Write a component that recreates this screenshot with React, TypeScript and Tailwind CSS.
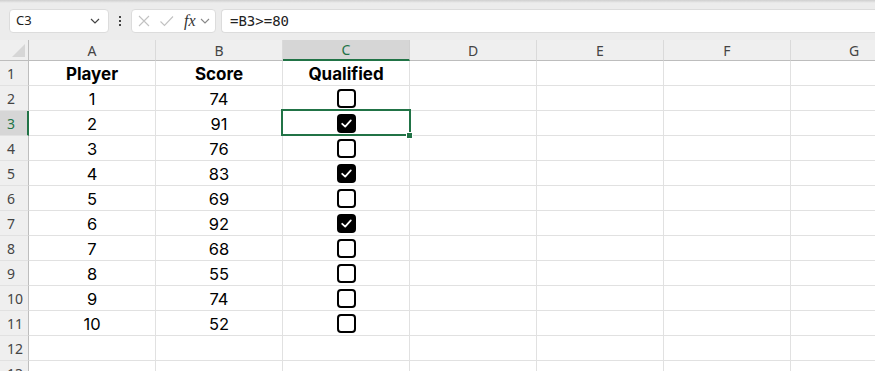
import React from "react";

const cols = ["A", "B", "C", "D", "E", "F", "G"];
const data: [number, number, boolean][] = [
  [1, 74, false],
  [2, 91, true],
  [3, 76, false],
  [4, 83, true],
  [5, 69, false],
  [6, 92, true],
  [7, 68, false],
  [8, 55, false],
  [9, 74, false],
  [10, 52, false],
];

function Checkbox({ checked }: { checked: boolean }) {
  return checked ? (
    <div className="w-[19px] h-[19px] rounded-[4px] bg-black flex items-center justify-center">
      <svg width="13" height="13" viewBox="0 0 13 13" fill="none">
        <path d="M2.2 6.8 L5.2 9.6 L10.8 3.4" stroke="white" strokeWidth="1.8" strokeLinecap="round" strokeLinejoin="round" />
      </svg>
    </div>
  ) : (
    <div className="w-[19px] h-[19px] rounded-[4px] border-2 border-black bg-white" />
  );
}

export default function App() {
  const rows: React.ReactNode[] = [];
  for (let r = 1; r <= 13; r++) {
    const sel = r === 3;
    const cells: React.ReactNode[] = [];
    cells.push(
      <div
        key="h"
        className={
          "h-[25px] flex items-center pl-[7px] pt-[1px] text-[14px] border-b border-b-[#e1e1e1] " +
          (sel
            ? "bg-[#d6d6d6] text-[#217346] border-r-2 border-r-[#217346]"
            : "bg-[#efefef] text-[#444444] border-r border-r-[#bdbdbd]")
        }
        style={{ fontFamily: '"Noto Sans", sans-serif' }}
      >
        {r}
      </div>
    );
    for (let c = 0; c < 7; c++) {
      let content: React.ReactNode = null;
      if (r === 1) {
        content = ["Player", "Score", "Qualified"][c] ?? null;
      } else if (r <= 11) {
        const d = data[r - 2];
        if (c === 0) content = d[0];
        else if (c === 1) content = d[1];
        else if (c === 2) content = <Checkbox checked={d[2]} />;
      }
      const isCb = r > 1 && c === 2;
      cells.push(
        <div
          key={c}
          className={
            "h-[25px] flex items-center justify-center border-r border-b border-[#e1e1e1] text-black " +
            (isCb ? "" : "pt-[3px] ") +
            (r === 1 ? "font-bold text-[17px]" : "text-[16.5px]")
          }
        >
          {content}
        </div>
      );
    }
    rows.push(<React.Fragment key={r}>{cells}</React.Fragment>);
  }

  return (
    <div
      className="w-[875px] h-[371px] overflow-hidden bg-white relative"
      style={{ fontFamily: 'Inter, "Noto Sans", sans-serif' }}
    >
      <div className="h-[3px] bg-gradient-to-b from-[#cfcfcf] to-[#ececec]" />
      <div className="h-[37px] bg-[#ececec] flex items-start pt-[6px] pl-[9px]">
        <div className="w-[100px] h-[24px] bg-white rounded-[4px] border border-[#dcdcdc] flex items-center justify-between pl-[6px] pr-[8px]">
          <span className="text-[13px] text-[#222]" style={{ fontFamily: '"Noto Sans", sans-serif' }}>C3</span>
          <svg width="10" height="6" viewBox="0 0 10 6" fill="none">
            <path d="M1 1 L5 5 L9 1" stroke="#444" strokeWidth="1.2" />
          </svg>
        </div>
        <div className="w-[22px] h-[24px] flex flex-col items-center justify-center gap-[2px]">
          <div className="w-[2px] h-[2px] bg-[#444]" />
          <div className="w-[2px] h-[2px] bg-[#444]" />
          <div className="w-[2px] h-[2px] bg-[#444]" />
        </div>
        <div className="w-[85px] h-[24px] bg-white rounded-[4px] border border-[#dcdcdc] flex items-center pl-[5px] gap-[0px]">
          <svg width="14" height="14" viewBox="0 0 14 14" fill="none">
            <path d="M2 2 L12 12 M12 2 L2 12" stroke="#c2c2c2" strokeWidth="1.1" />
          </svg>
          <svg width="16" height="14" viewBox="0 0 16 14" fill="none" className="ml-[8px]">
            <path d="M1.5 7.5 L5.5 11.5 L14 2.5" stroke="#c2c2c2" strokeWidth="1.1" />
          </svg>
          <span
            className="ml-[9px] text-[16px] italic text-[#333] leading-none"
            style={{ fontFamily: '"Liberation Serif", serif' }}
          >
            fx
          </span>
          <svg width="10" height="6" viewBox="0 0 10 6" fill="none" className="ml-[4px]">
            <path d="M1 1 L5 5 L9 1" stroke="#888" strokeWidth="1.1" />
          </svg>
        </div>
        <div className="ml-[5px] flex-1 h-[24px] bg-white rounded-l-[4px] border border-r-0 border-[#dcdcdc] flex items-center pl-[8px]">
          <span className="text-[14px] text-[#222]" style={{ fontFamily: '"DejaVu Sans Mono", monospace' }}>
            =B3&gt;=80
          </span>
        </div>
      </div>
      <div className="grid grid-cols-[29px_127px_127px_127px_127px_127px_127px_127px]">
        <div className="h-[21px] bg-[#efefef] border-r border-b border-[#bdbdbd] relative overflow-hidden">
          <div className="absolute right-[3px] bottom-[3px] w-0 h-0 border-l-[13px] border-l-transparent border-b-[13px] border-b-[#d6d6d6]" />
        </div>
        {cols.map((c) => (
          <div
            key={c}
            className={
              "h-[21px] flex items-center justify-center text-[14px] border-r " +
              (c === "C"
                ? "bg-[#d6d6d6] text-[#217346] border-b-2 border-b-[#217346] border-r-[#d0d0d0]"
                : "bg-[#efefef] text-[#444444] border-b border-b-[#bdbdbd] border-r-[#dadada]")
            }
            style={{ fontFamily: '"Noto Sans", sans-serif' }}
          >
            {c}
          </div>
        ))}
        {rows}
      </div>
      <div className="absolute left-[281px] top-[109px] w-[130px] h-[27px] border-2 border-[#217346]" />
      <div className="absolute left-[406px] top-[132px] w-[7px] h-[7px] bg-[#217346] border border-white" />
    </div>
  );
}
